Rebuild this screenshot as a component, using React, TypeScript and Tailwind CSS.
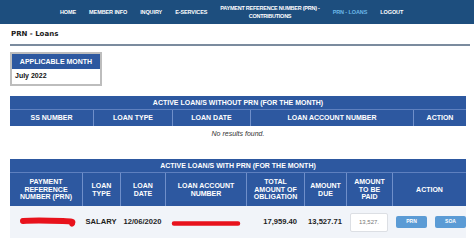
import { useState } from "react"

const NAV = ["HOME", "MEMBER INFO", "INQUIRY", "E-SERVICES"]

const HEAD = "bg-[#2d58a0] text-white font-bold text-[7px] leading-[7.5px]"
const DIV = "border-l border-[#6f8fca]"

function Redacted({ w, h, d, sw }: { w: number; h: number; d: string; sw: number }) {
  return (
    <svg width={w} height={h} viewBox={`0 0 ${w} ${h}`} className="block">
      <path d={d} fill="none" stroke="#e8121c" strokeWidth={sw} strokeLinecap="round" strokeLinejoin="round" />
    </svg>
  )
}

export default function App() {
  const [amount, setAmount] = useState("13,527.71")

  return (
    <div className="w-[474px] h-[241px] bg-white overflow-hidden font-['Liberation_Sans',Arial,sans-serif]">
      {/* top navigation */}
      <nav className="h-[24px] bg-[#1d4e7e] flex items-center pl-[60px] gap-[13px] text-white font-bold text-[5.5px] leading-[8px] tracking-[-0.1px] whitespace-nowrap">
        {NAV.map((n) => (
          <span key={n}>{n}</span>
        ))}
        <span className="text-center tracking-[-0.25px]">
          PAYMENT REFERENCE NUMBER (PRN) -<br />CONTRIBUTIONS
        </span>
        <span className="text-[#6bb8e8]">PRN - LOANS</span>
        <span>LOGOUT</span>
      </nav>

      <div className="px-[10px]">
        <div className="h-[20px] flex items-center pl-[1px] font-['DejaVu_Sans',Verdana,sans-serif] font-bold text-[7px] text-[#1a1a1a]">
          PRN - Loans
        </div>
        <div className="h-[2px] w-[460px] bg-[#7b8b9e]" />

        {/* applicable month */}
        <div className="mt-[6px] w-[92px] border-2 border-[#bdbdbd]">
          <div className={`${HEAD} h-[15px] flex items-center justify-center`}>APPLICABLE MONTH</div>
          <div className="h-[15px] flex items-center pl-[3px] font-bold text-[7px] text-[#111]">July 2022</div>
        </div>

        {/* loans without PRN */}
        <div className="mt-[10px] w-[456px]">
          <div className={`${HEAD} h-[14px] flex items-center justify-center border-b border-[#5e80bf]`}>
            ACTIVE LOAN/S WITHOUT PRN (FOR THE MONTH)
          </div>
          <div className={`${HEAD} h-[16px] grid grid-cols-[83px_79px_78px_163px_53px]`}>
            <div className="flex items-center justify-center">SS NUMBER</div>
            <div className={`${DIV} flex items-center justify-center`}>LOAN TYPE</div>
            <div className={`${DIV} flex items-center justify-center`}>LOAN DATE</div>
            <div className={`${DIV} flex items-center justify-center`}>LOAN ACCOUNT NUMBER</div>
            <div className={`${DIV} flex items-center justify-center`}>ACTION</div>
          </div>
          <div className="h-[16px] flex items-center justify-center italic text-[7px] text-[#333]">
            No results found.
          </div>
        </div>

        {/* loans with PRN */}
        <div className="mt-[17px] w-[456px]">
          <div className={`${HEAD} h-[14px] flex items-center justify-center border-b border-[#5e80bf]`}>
            ACTIVE LOAN/S WITH PRN (FOR THE MONTH)
          </div>
          <div className={`${HEAD} h-[33px] grid grid-cols-[72px_38px_45px_81px_58px_42px_46px_74px] text-center`}>
            <div className="flex items-center justify-center">PAYMENT<br />REFERENCE<br />NUMBER (PRN)</div>
            <div className={`${DIV} flex items-center justify-center`}>LOAN<br />TYPE</div>
            <div className={`${DIV} flex items-center justify-center`}>LOAN<br />DATE</div>
            <div className={`${DIV} flex items-center justify-center`}>LOAN ACCOUNT<br />NUMBER</div>
            <div className={`${DIV} flex items-center justify-center`}>TOTAL<br />AMOUNT OF<br />OBLIGATION</div>
            <div className={`${DIV} flex items-center justify-center`}>AMOUNT<br />DUE</div>
            <div className={`${DIV} flex items-center justify-center`}>AMOUNT<br />TO BE<br />PAID</div>
            <div className={`${DIV} flex items-center justify-center`}>ACTION</div>
          </div>
          <div className="h-[32px] bg-[#f1f4f9] grid grid-cols-[72px_38px_45px_81px_58px_42px_46px_74px] font-bold text-[7.6px] text-[#1e1e1e]">
            <div className="flex items-center justify-center pl-[3px]">
              <Redacted w={58} h={12} sw={6} d="M4 5 C 16 4, 30 4.5, 44 5 S 52 6, 53 7.5" />
            </div>
            <div className="flex items-center justify-center">SALARY</div>
            <div className="flex items-center justify-center">12/06/2020</div>
            <div className="flex items-center justify-center pt-[2px]">
              <Redacted w={70} h={7} sw={4.5} d="M3 3.5 C 20 3.2, 45 3.8, 67 3.5" />
            </div>
            <div className="flex items-center justify-end pr-[7px]">17,959.40</div>
            <div className="flex items-center justify-center">13,527.71</div>
            <div className="flex items-center justify-center">
              <input
                value={amount}
                onChange={(e) => setAmount(e.target.value)}
                className="w-[38px] h-[19px] px-[8px] bg-white border border-[#dcdfe4] rounded-[2px] text-[6px] font-normal text-[#777] outline-none"
              />
            </div>
            <div className="flex items-center gap-[8px] pl-[4px]">
              <button className="w-[31px] h-[12px] rounded-[2px] bg-[#5b9bd5] text-white text-[5px] font-bold">PRN</button>
              <button className="w-[31px] h-[12px] rounded-[2px] bg-[#5b9bd5] text-white text-[5px] font-bold">SOA</button>
            </div>
          </div>
        </div>
      </div>
    </div>
  )
}
